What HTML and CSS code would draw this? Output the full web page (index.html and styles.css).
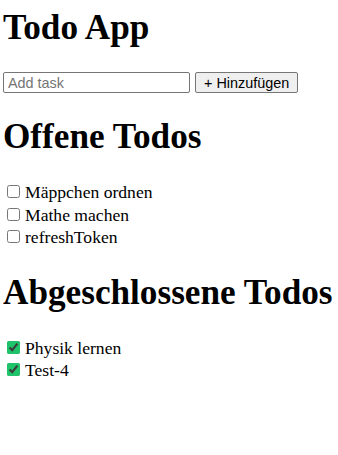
FILE: index.html
```html
<!DOCTYPE html>
<html lang="en">
<head>
  <meta charset="UTF-8">
  <meta name="viewport" content="width=device-width, initial-scale=1.0">
  <title>Todo App</title>
  <link rel="stylesheet" href="styles.css">
</head>
<body>
  <h1 class="title">Todo App</h1>
  <div class="add-row">
    <input type="text" id="task-input" placeholder="Add task">
    <button id="add-btn">+ Hinzufügen</button>
  </div>

  <h1>Offene Todos</h1>
  <ul class="todo-list" id="open-list">
    <li><input type="checkbox"><span>Mäppchen ordnen</span></li>
    <li><input type="checkbox"><span>Mathe machen</span></li>
    <li><input type="checkbox"><span>refreshToken</span></li>
  </ul>

  <h1>Abgeschlossene Todos</h1>
  <ul class="todo-list" id="done-list">
    <li><input type="checkbox" checked><span>Physik lernen</span></li>
    <li><input type="checkbox" checked><span>Test-4</span></li>
  </ul>
</body>
</html>
```

FILE: styles.css
```css
body {
  font-family: "Liberation Serif", "Times New Roman", serif;
  font-size: 17.6px;
  margin: 3px;
  color: #000;
}

h1 {
  font-size: 35.2px;
  line-height: 40px;
  margin: 24px 0;
  white-space: nowrap;
}

.title {
  margin: 5px 0 24px;
}

.add-row {
  display: flex;
  gap: 5px;
  height: 21px;
}

.add-row input,
.add-row button {
  font-family: "Liberation Sans", Arial, sans-serif;
  font-size: 14.4px;
  height: 21px;
  box-sizing: border-box;
  margin: 0;
}

#task-input {
  width: 187px;
  padding: 0 4px;
  border: 1px solid #767676;
  border-radius: 2px;
}

#task-input::placeholder {
  color: #757575;
}

#add-btn {
  padding: 0 8px;
  white-space: nowrap;
  border: 1px solid #767676;
  border-radius: 2px;
  background-color: #efefef;
  color: #000;
}

.todo-list {
  list-style: none;
  padding: 0;
  margin: 0;
}

.todo-list li {
  height: 22.5px;
  line-height: 22.5px;
}

.todo-list span {
  margin-left: 2px;
}

.todo-list input[type="checkbox"] {
  accent-color: #1fc46a;
}
```
